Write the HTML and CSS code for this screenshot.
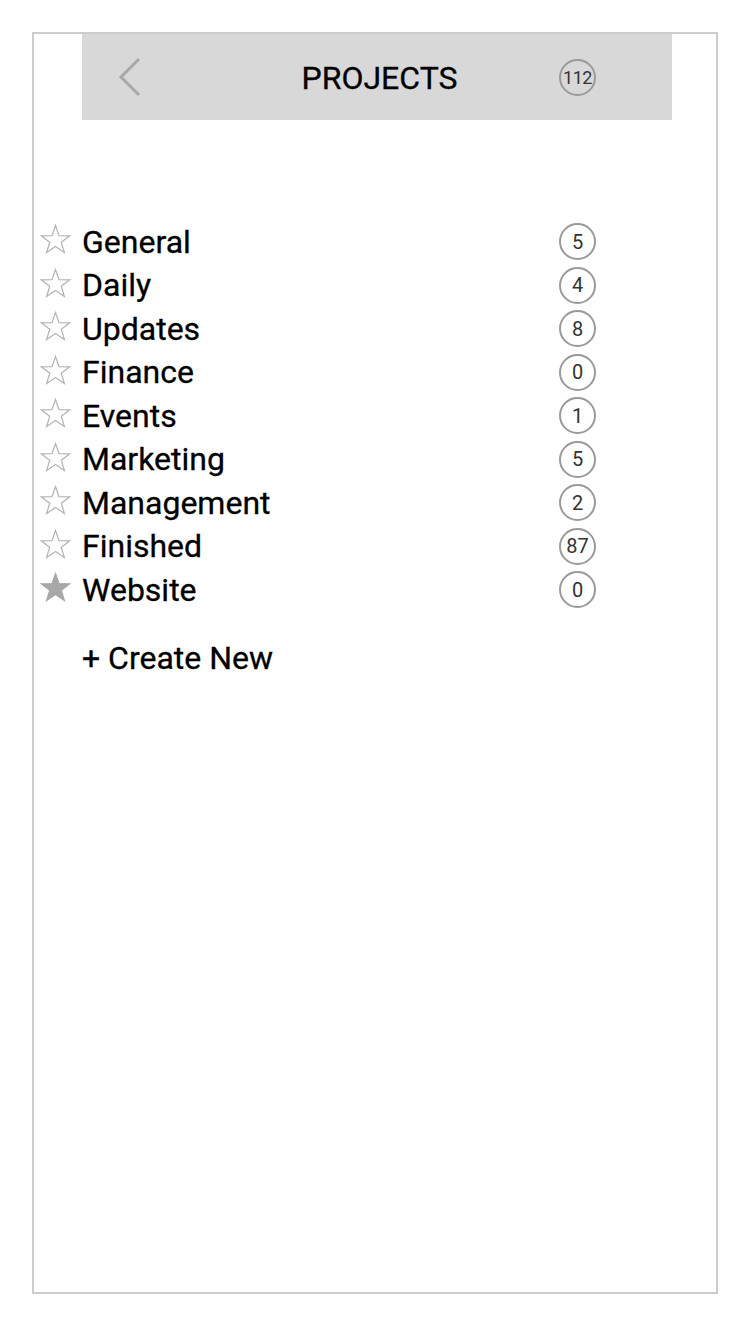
FILE: index.html
```html
<!DOCTYPE html>
<html lang="en">
<head>
<meta charset="utf-8">
<title>Projects</title>
<link rel="stylesheet" href="styles.css">
</head>
<body>
<div class="screen">
  <header class="topbar">
    <button class="back" aria-label="Back">
      <svg width="26" height="42" viewBox="0 0 26 42"><polyline points="22,3 4,21 22,39" fill="none" stroke="#a8a8a8" stroke-width="3"/></svg>
    </button>
    <h1 class="title">PROJECTS</h1>
    <span class="count count-top">112</span>
  </header>

  <ul class="projects">
    <li class="project"><svg class="star" viewBox="0 0 32 30"><polygon points="16,1.5 19.4,11.2 29.8,11.4 21.6,17.7 24.6,27.6 16,21.7 7.4,27.6 10.4,17.7 2.2,11.4 12.6,11.2" fill="none" stroke="#b4b4b4" stroke-width="1.2"/></svg><span class="name">General</span><span class="count">5</span></li>
    <li class="project"><svg class="star" viewBox="0 0 32 30"><polygon points="16,1.5 19.4,11.2 29.8,11.4 21.6,17.7 24.6,27.6 16,21.7 7.4,27.6 10.4,17.7 2.2,11.4 12.6,11.2" fill="none" stroke="#b4b4b4" stroke-width="1.2"/></svg><span class="name">Daily</span><span class="count">4</span></li>
    <li class="project"><svg class="star" viewBox="0 0 32 30"><polygon points="16,1.5 19.4,11.2 29.8,11.4 21.6,17.7 24.6,27.6 16,21.7 7.4,27.6 10.4,17.7 2.2,11.4 12.6,11.2" fill="none" stroke="#b4b4b4" stroke-width="1.2"/></svg><span class="name">Updates</span><span class="count">8</span></li>
    <li class="project"><svg class="star" viewBox="0 0 32 30"><polygon points="16,1.5 19.4,11.2 29.8,11.4 21.6,17.7 24.6,27.6 16,21.7 7.4,27.6 10.4,17.7 2.2,11.4 12.6,11.2" fill="none" stroke="#b4b4b4" stroke-width="1.2"/></svg><span class="name">Finance</span><span class="count">0</span></li>
    <li class="project"><svg class="star" viewBox="0 0 32 30"><polygon points="16,1.5 19.4,11.2 29.8,11.4 21.6,17.7 24.6,27.6 16,21.7 7.4,27.6 10.4,17.7 2.2,11.4 12.6,11.2" fill="none" stroke="#b4b4b4" stroke-width="1.2"/></svg><span class="name">Events</span><span class="count">1</span></li>
    <li class="project"><svg class="star" viewBox="0 0 32 30"><polygon points="16,1.5 19.4,11.2 29.8,11.4 21.6,17.7 24.6,27.6 16,21.7 7.4,27.6 10.4,17.7 2.2,11.4 12.6,11.2" fill="none" stroke="#b4b4b4" stroke-width="1.2"/></svg><span class="name">Marketing</span><span class="count">5</span></li>
    <li class="project"><svg class="star" viewBox="0 0 32 30"><polygon points="16,1.5 19.4,11.2 29.8,11.4 21.6,17.7 24.6,27.6 16,21.7 7.4,27.6 10.4,17.7 2.2,11.4 12.6,11.2" fill="none" stroke="#b4b4b4" stroke-width="1.2"/></svg><span class="name">Management</span><span class="count">2</span></li>
    <li class="project"><svg class="star" viewBox="0 0 32 30"><polygon points="16,1.5 19.4,11.2 29.8,11.4 21.6,17.7 24.6,27.6 16,21.7 7.4,27.6 10.4,17.7 2.2,11.4 12.6,11.2" fill="none" stroke="#b4b4b4" stroke-width="1.2"/></svg><span class="name">Finished</span><span class="count">87</span></li>
    <li class="project"><svg class="star" viewBox="0 0 32 30"><polygon points="16,1.5 19.4,11.2 29.8,11.4 21.6,17.7 24.6,27.6 16,21.7 7.4,27.6 10.4,17.7 2.2,11.4 12.6,11.2" fill="#a8a8a8" stroke="#a8a8a8" stroke-width="1.2"/></svg><span class="name">Website</span><span class="count">0</span></li>
  </ul>

  <a class="create" href="#">+ Create New</a>
</div>
</body>
</html>
```
FILE: styles.css
```css
* {
  box-sizing: border-box;
}

body {
  margin: 0;
  background: #fff;
  font-family: Roboto, "Liberation Sans", Arial, sans-serif;
  color: #000;
}

.screen {
  margin: 32px 0 0 32px;
  width: 686px;
  height: 1262px;
  border: 2px solid #cccccc;
}

/* top bar */
.topbar {
  margin-left: 48px;
  width: 590px;
  height: 86px;
  background: #d8d8d8;
  display: grid;
  grid-template-columns: 120px 1fr 120px;
  align-items: center;
}

.back {
  justify-self: start;
  margin-left: 35px;
  padding: 0;
  border: 0;
  background: none;
  display: flex;
}

.title {
  margin: 2px 0 0;
  padding-left: 5px;
  text-align: center;
  font-size: 32px;
  font-weight: 400;
  color: #000;
  -webkit-text-stroke: 0.3px #000;
}

.count {
  width: 37px;
  height: 37px;
  border: 2px solid #9a9a9a;
  border-radius: 50%;
  display: flex;
  align-items: center;
  justify-content: center;
  font-size: 20px;
  color: #333;
}

.count-top {
  justify-self: start;
  margin-left: 7px;
  font-size: 18px;
  letter-spacing: -0.5px;
}

/* project list */
.projects {
  list-style: none;
  margin: 100px 0 0;
  padding: 0;
}

.project {
  height: 43.5px;
  display: grid;
  grid-template-columns: 48px 477px 37px;
  align-items: center;
}

.star {
  width: 33px;
  height: 31px;
  margin-left: 5px;
  margin-top: -4px;
}

.name {
  font-size: 32px;
  font-weight: 400;
  line-height: 1;
  -webkit-text-stroke: 0.3px #000;
}

.create {
  display: block;
  margin: 27px 0 0 48px;
  font-size: 32px;
  font-weight: 400;
  color: #000;
  text-decoration: none;
  -webkit-text-stroke: 0.3px #000;
}
```
